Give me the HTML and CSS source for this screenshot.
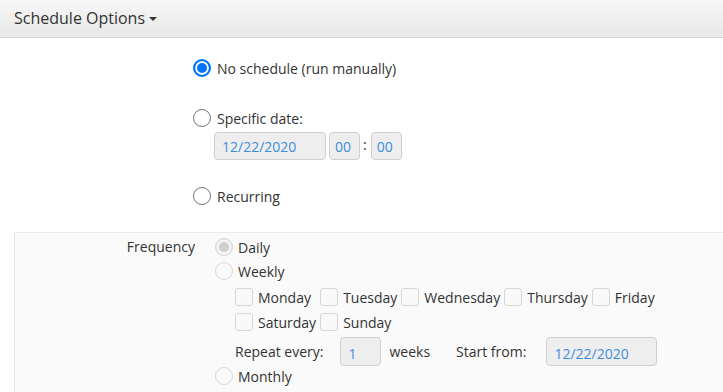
FILE: index.html
```html
<!DOCTYPE html>
<html lang="en">
<head>
  <meta charset="UTF-8">
  <title>Schedule Options</title>
  <link rel="stylesheet" href="styles.css">
</head>
<body>
  <div class="section-head">
    <span class="section-title">Schedule Options</span><span class="caret"></span>
  </div>

  <div class="options">
    <label class="opt-row">
      <input type="radio" name="sched" class="radio" checked>
      <span>No schedule (run manually)</span>
    </label>

    <label class="opt-row second">
      <input type="radio" name="sched" class="radio">
      <span>Specific date:</span>
    </label>
    <div class="date-row">
      <input type="text" class="field date" value="12/22/2020" disabled>
      <input type="text" class="field time" value="00" disabled>
      <span class="colon">:</span>
      <input type="text" class="field time" value="00" disabled>
    </div>

    <label class="opt-row third">
      <input type="radio" name="sched" class="radio">
      <span>Recurring</span>
    </label>
  </div>

  <div class="panel">
    <div class="freq-label">Frequency</div>
    <div class="freq-body">
      <label class="row">
        <input type="radio" name="freq" class="radio" checked disabled>
        <span>Daily</span>
      </label>
      <label class="row">
        <input type="radio" name="freq" class="radio" disabled>
        <span>Weekly</span>
      </label>

      <div class="days">
        <label class="day"><input type="checkbox" class="check" disabled><span>Monday</span></label>
        <label class="day"><input type="checkbox" class="check" disabled><span>Tuesday</span></label>
        <label class="day"><input type="checkbox" class="check" disabled><span>Wednesday</span></label>
        <label class="day"><input type="checkbox" class="check" disabled><span>Thursday</span></label>
        <label class="day"><input type="checkbox" class="check" disabled><span>Friday</span></label>
        <label class="day"><input type="checkbox" class="check" disabled><span>Saturday</span></label>
        <label class="day"><input type="checkbox" class="check" disabled><span>Sunday</span></label>
      </div>

      <div class="repeat">
        <span class="repeat-label">Repeat every:</span>
        <input type="text" class="field weeks" value="1" disabled>
        <span class="weeks-label">weeks</span>
        <span class="start-label">Start from:</span>
        <input type="text" class="field start" value="12/22/2020" disabled>
      </div>

      <label class="row monthly">
        <input type="radio" name="freq" class="radio" disabled>
        <span>Monthly</span>
      </label>
    </div>
  </div>
</body>
</html>
```

FILE: styles.css
```css
* { box-sizing: border-box; }

body {
  margin: 0;
  font-family: 'Open Sans', sans-serif;
  font-size: 14px;
  color: #333;
  background: #fff;
  overflow: hidden;
}

.section-head {
  height: 38px;
  display: flex;
  align-items: center;
  padding-left: 14px;
  padding-bottom: 2px;
  background: linear-gradient(#f7f7f7, #e8e8e8);
  border-bottom: 1px solid #d6d6d6;
}

.section-title {
  font-size: 16px;
  color: #333;
}

.caret {
  display: inline-block;
  margin-left: 4px;
  margin-top: 2px;
  border-top: 4px solid #333;
  border-left: 4px solid transparent;
  border-right: 4px solid transparent;
}

/* radios + checkboxes */
.radio, .check {
  appearance: none;
  -webkit-appearance: none;
  margin: 0;
  width: 18px;
  height: 18px;
  flex: none;
  background: #fff;
}

.radio {
  border-radius: 50%;
  border: 1px solid #767676;
}

.radio:checked {
  border: 2px solid #0075ff;
  background: #0075ff;
  box-shadow: inset 0 0 0 2px #fff;
}

.radio:disabled {
  border: 1px solid #d8d8d8;
  background: #fafafa;
}

.radio:disabled:checked {
  background: #cfcfcf;
  box-shadow: inset 0 0 0 3px #f3f3f3;
}

.check {
  border: 1px solid #d6d6d6;
  border-radius: 3px;
  background: #f9f9f9;
}

.field {
  height: 28px;
  border: 1px solid #cfcfcf;
  border-radius: 4px;
  background: #eee;
  color: #3c8de0;
  font-family: inherit;
  font-size: 14px;
  padding: 0 7px;
  margin: 0;
}

/* main options */
.options {
  padding: 18px 0 0 193px;
}

.opt-row {
  display: flex;
  align-items: center;
  gap: 6px;
  height: 24px;
}

.opt-row.second { margin-top: 26px; }
.opt-row.third { margin-top: 24px; }

.date-row {
  display: flex;
  align-items: center;
  margin: 2px 0 0 21px;
}

.date { width: 112px; }

.time {
  width: 31px;
  margin-left: 3px;
  padding: 0 5px;
}

.colon {
  margin: -4px 1px 0 3px;
  color: #333;
}

/* recurring panel */
.panel {
  display: flex;
  margin: 24px 0 0 14px;
  padding: 2px 0 20px;
  background: #fafafa;
  border: 1px solid #eaeaea;
  border-right: none;
}

.freq-label {
  width: 180px;
  text-align: right;
  line-height: 24px;
}

.freq-body {
  margin-left: 20px;
}

.row {
  display: flex;
  align-items: center;
  gap: 5px;
  height: 24px;
}

.days {
  display: grid;
  grid-template-columns: repeat(5, auto);
  justify-content: start;
  column-gap: 4px;
  row-gap: 1px;
  margin: 2px 0 0 20px;
}

.day {
  display: flex;
  align-items: center;
  gap: 5px;
  height: 24px;
}

.repeat {
  display: flex;
  align-items: center;
  height: 29px;
  margin: 3px 0 0 20px;
}

.weeks {
  width: 41px;
  height: 29px;
  margin-left: 17px;
  padding-top: 3px;
}

.weeks-label { margin-left: 8px; }
.start-label { margin-left: 26px; }

.start {
  width: 111px;
  height: 29px;
  margin-left: 20px;
  padding-top: 3px;
}

.monthly { margin-top: -2px; }
```
